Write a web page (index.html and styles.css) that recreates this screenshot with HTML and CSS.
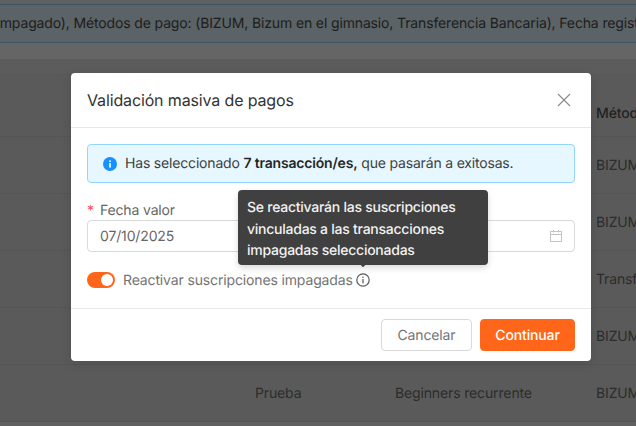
FILE: index.html
```html
<!DOCTYPE html>
<html lang="es">
<head>
<meta charset="utf-8">
<title>Validación masiva de pagos</title>
<link rel="stylesheet" href="styles.css">
</head>
<body>
<div class="page">
  <div class="filter-banner"><span class="filter-text">Estado: (Impagado), Métodos de pago: (BIZUM, Bizum en el gimnasio, Transferencia Bancaria), Fecha registro</span></div>
  <div class="table">
    <div class="table-top"></div>
    <div class="row head"><span class="c-name"></span><span class="c-plan"></span><span class="c-method">Método de pago</span></div>
    <div class="row"><span class="c-name"></span><span class="c-plan"></span><span class="c-method">BIZUM</span></div>
    <div class="row"><span class="c-name"></span><span class="c-plan"></span><span class="c-method">BIZUM</span></div>
    <div class="row"><span class="c-name"></span><span class="c-plan"></span><span class="c-method">Transferencia</span></div>
    <div class="row"><span class="c-name"></span><span class="c-plan"></span><span class="c-method">BIZUM</span></div>
    <div class="row"><span class="c-name">Prueba</span><span class="c-plan">Beginners recurrente</span><span class="c-method">BIZUM</span></div>
  </div>
</div>
<div class="mask"></div>
<div class="modal">
  <div class="modal-header">
    <span class="modal-title">Validación masiva de pagos</span>
    <svg class="close" width="14" height="14" viewBox="0 0 14 14"><path d="M1 1L13 13M13 1L1 13" stroke="#8c8c8c" stroke-width="1.2" fill="none"/></svg>
  </div>
  <div class="modal-body">
    <div class="alert">
      <svg class="alert-icon" width="14" height="14" viewBox="0 0 14 14"><circle cx="7" cy="7" r="7" fill="#1890ff"/><rect x="6.2" y="6" width="1.6" height="4.6" fill="#fff"/><rect x="6.2" y="3.4" width="1.6" height="1.6" fill="#fff"/></svg>
      <span>Has seleccionado <b>7 transacción/es,</b> que pasarán a exitosas.</span>
    </div>
    <div class="field-label"><span class="req">*</span>Fecha valor</div>
    <div class="date-input">
      <span>07/10/2025</span>
      <svg width="14" height="14" viewBox="0 0 14 14" fill="none" stroke="#c4c4c4" stroke-width="1"><rect x="1.5" y="2.5" width="11" height="10"/><path d="M1.5 5.5H12.5M4.5 1V3.5M9.5 1V3.5"/></svg>
    </div>
    <div class="switch-row">
      <span class="switch"><span class="knob"></span></span>
      <span class="switch-label">Reactivar suscripciones impagadas</span>
      <svg class="hint" width="14" height="14" viewBox="0 0 14 14" fill="none"><circle cx="7" cy="7" r="6.2" stroke="#595959" stroke-width="1.2"/><rect x="6.4" y="6" width="1.2" height="4.4" fill="#595959"/><rect x="6.4" y="3.6" width="1.2" height="1.3" fill="#595959"/></svg>
      <div class="tooltip">Se reactivarán las suscripciones vinculadas a las transacciones impagadas seleccionadas<span class="arrow"></span></div>
    </div>
  </div>
  <div class="modal-footer">
    <button class="btn">Cancelar</button>
    <button class="btn primary">Continuar</button>
  </div>
</div>
</body>
</html>
```
FILE: styles.css
```css
* { box-sizing: border-box; }
html, body { margin: 0; height: 100%; overflow: hidden; }
body { font-family: Inter, "Liberation Sans", sans-serif; font-size: 14px; letter-spacing: -0.14px; color: #262626; background: #ffffff; position: relative; text-rendering: geometricPrecision; }
.page { height: 100%; overflow: hidden; padding-top: 4px; background: #f0f0f0; }
.filter-banner { height: 39px; background: #e6f7ff; border: 1px solid #91d5ff; border-width: 1px 0; display: flex; align-items: center; white-space: nowrap; overflow: hidden; color: #4d4d4d; }
.filter-text { margin-left: -61px; }
.table { background: #e2e2e2; }
.table-top { height: 32px; background: linear-gradient(#fdfdfd 0, #fdfdfd 16px, #e6e6e6 16px); border-bottom: 1px solid #dcdcdc; }
.row { display: flex; height: 57px; align-items: center; border-bottom: 1px solid #d4d4d4; white-space: nowrap; color: #6f6f6f; }
.row.head { height: 62px; font-weight: 500; padding-top: 16px; color: #555; }
.c-name { width: 395px; padding-left: 255px; flex: none; }
.c-plan { width: 201px; flex: none; }
.c-method { flex: none; width: 40px; overflow: hidden; }
.mask { position: absolute; inset: 0; background: rgba(0,0,0,.6); }
.modal { position: absolute; left: 71px; top: 73px; width: 520px; height: 288px; background: #fff; border-radius: 4px; display: flex; flex-direction: column; box-shadow: 0 3px 12px rgba(0,0,0,.12); }
.modal-header { height: 55px; flex: none; padding: 0 20px 0 16px; border-bottom: 1px solid #e8e8e8; display: flex; align-items: center; justify-content: space-between; }
.modal-title { font-size: 16px; color: #333; }
.modal-body { flex: 1; padding: 16px 16px 0; }
.alert { height: 39px; background: #e6f7ff; border: 1px solid #91d5ff; border-radius: 4px; display: flex; align-items: center; gap: 8px; padding: 0 15px; color: #404040; letter-spacing: -0.18px; }
.alert b { font-weight: 600; color: #262626; }
.field-label { margin-top: 15px; height: 22px; line-height: 22px; padding-top: 2px; color: #666; }
.req { color: #ff4d4f; margin-right: 6px; }
.date-input { height: 32px; border: 1px solid #d9d9d9; border-radius: 4px; padding: 0 11px 0 12px; display: flex; align-items: center; justify-content: space-between; color: #666; }
.switch-row { position: relative; margin-top: 20px; display: flex; align-items: center; height: 16px; color: #737373; }
.switch { width: 28px; height: 16px; border-radius: 8px; background: #ff6619; position: relative; flex: none; margin-right: 8px; }
.knob { position: absolute; right: 2px; top: 2px; width: 12px; height: 12px; border-radius: 50%; background: #fff; }
.hint { margin-left: 3px; }
.tooltip { position: absolute; left: 151px; bottom: 23px; width: 250px; height: 75px; padding: 7px 9px; background: #404040; color: #f2f2f2; border-radius: 4px; line-height: 21.5px; font-weight: 500; letter-spacing: -0.25px; box-shadow: 0 3px 6px rgba(0,0,0,.15); }
.arrow { position: absolute; left: 122px; bottom: -1px; width: 6px; height: 6px; background: #404040; transform: rotate(45deg); }
.modal-footer { height: 53px; flex: none; border-top: 1px solid #e8e8e8; padding: 10px 16px; display: flex; justify-content: flex-end; gap: 8px; }
.btn { font: inherit; letter-spacing: inherit; text-rendering: inherit; height: 32px; width: 91px; padding: 0; background: #fff; border: 1px solid #d9d9d9; border-radius: 4px; color: #737373; }
.btn.primary { width: 95px; background: #ff6619; border-color: #ff6619; color: #fff; font-weight: 500; }
```
